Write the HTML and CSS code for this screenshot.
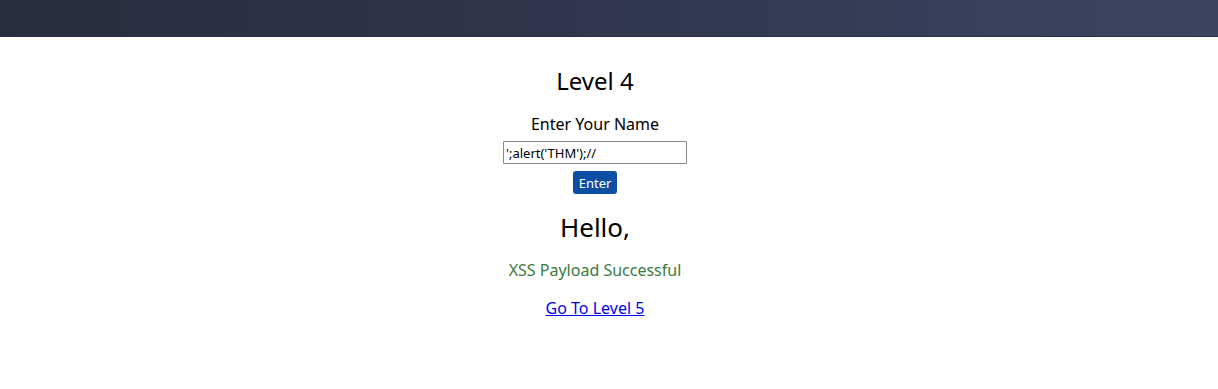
FILE: index.html
```html
<!DOCTYPE html>
<html>
<head>
<meta charset="utf-8">
<link rel="stylesheet" href="styles.css">
</head>
<body>
<div class="topbar"></div>
<main class="content">
  <h2 class="title">Level 4</h2>
  <form class="form" onsubmit="return false">
    <label class="label">Enter Your Name</label>
    <input class="field" type="text" value="';alert('THM');//">
    <button class="btn" type="button">Enter</button>
  </form>
  <h2 class="hello">Hello,</h2>
  <p class="success">XSS Payload Successful</p>
  <a class="next" href="#">Go To Level 5</a>
</main>
</body>
</html>
```
FILE: styles.css
```css
html, body {
  margin: 0;
  padding: 0;
  background: #ffffff;
}
body {
  font-family: "Noto Sans", "Open Sans", sans-serif;
  color: #000;
}
.topbar {
  height: 36px;
  background: linear-gradient(90deg, #262d3c 0%, #2e3448 35%, #323a50 60%, #38405a 80%, #3c4560 100%);
  border-bottom: 1px solid #2c2c48;
}
.content {
  width: 1190px;
  display: flex;
  flex-direction: column;
  align-items: center;
}
.title {
  margin: 28px 0 0;
  font-size: 24px;
  font-weight: 400;
  line-height: 32px;
}
.form {
  display: flex;
  flex-direction: column;
  align-items: center;
  margin-top: 16px;
}
.label {
  font-size: 16px;
  line-height: 22px;
}
.field {
  margin-top: 6px;
  width: 184px;
  height: 23px;
  box-sizing: border-box;
  border: 1px solid #8a8a8a;
  border-radius: 1px;
  padding: 0 2px;
  font-family: "Noto Sans", sans-serif;
  font-size: 13px;
  color: #000;
}
.btn {
  margin-top: 7px;
  width: 44px;
  height: 23px;
  padding: 0;
  border: none;
  border-radius: 3px;
  background: #0b4ea2;
  color: #fff;
  font-family: "Noto Sans", sans-serif;
  font-size: 13px;
}
.hello {
  margin: 16px 0 0;
  font-size: 26px;
  font-weight: 400;
  line-height: 34px;
}
.success {
  margin: 15px 0 0;
  font-size: 16px;
  line-height: 22px;
  color: #3d7a3d;
}
.next {
  margin-top: 16px;
  font-size: 16px;
  line-height: 22px;
  color: #0000ee;
}
```
